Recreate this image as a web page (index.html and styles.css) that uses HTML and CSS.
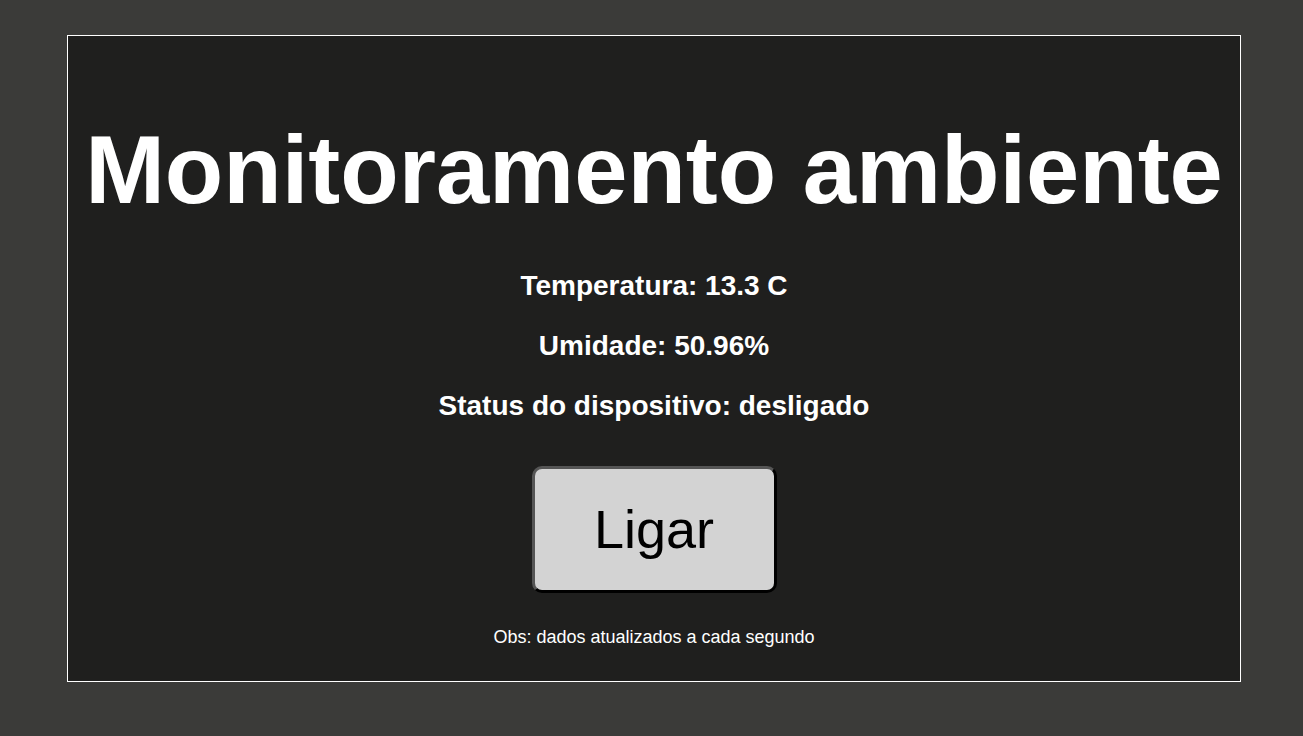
FILE: index.html
```html
<!DOCTYPE html>
<html lang="pt">
<head>
<meta charset="utf-8">
<title>Monitoramento ambiente</title>
<link rel="stylesheet" href="styles.css">
</head>
<body>
<main class="panel">
  <h1 class="title">Monitoramento ambiente</h1>
  <div class="readings">
    <p class="reading">Temperatura: 13.3 C</p>
    <p class="reading">Umidade: 50.96%</p>
    <p class="reading">Status do dispositivo: desligado</p>
  </div>
  <button class="toggle" type="button">Ligar</button>
  <p class="note">Obs: dados atualizados a cada segundo</p>
</main>
</body>
</html>
```
FILE: styles.css
```css
html, body {
  margin: 0;
  padding: 0;
}
body {
  background: #3b3b39;
  font-family: "Liberation Sans", Arial, sans-serif;
  color: #ffffff;
  padding: 35px 0 0 67px;
  height: 736px;
  box-sizing: border-box;
}
.panel {
  width: 1172px;
  height: 565px;
  border: 1px solid #ffffff;
  background: #1f1f1e;
  display: flex;
  flex-direction: column;
  align-items: center;
  padding-top: 80px;
  box-sizing: content-box;
}
.title {
  margin: 0;
  font-size: 95.7px;
  font-weight: bold;
  line-height: 107px;
}
.readings {
  margin-top: 47px;
  display: flex;
  flex-direction: column;
  align-items: center;
  gap: 28px;
}
.reading {
  margin: 0;
  font-size: 28px;
  font-weight: bold;
  line-height: 32px;
}
.toggle {
  margin-top: 44px;
  font-family: "Liberation Sans", Arial, sans-serif;
  font-size: 54px;
  line-height: 61px;
  color: #000;
  background: #d3d3d3;
  padding: 30px 0;
  border: 3px solid #000;
  border-top-color: #555;
  border-left-color: #555;
  border-radius: 10px;
  width: 245px;
  height: 127px;
  box-sizing: border-box;
}
.note {
  margin: 34px 0 0;
  font-size: 18px;
  line-height: 21px;
}
```
